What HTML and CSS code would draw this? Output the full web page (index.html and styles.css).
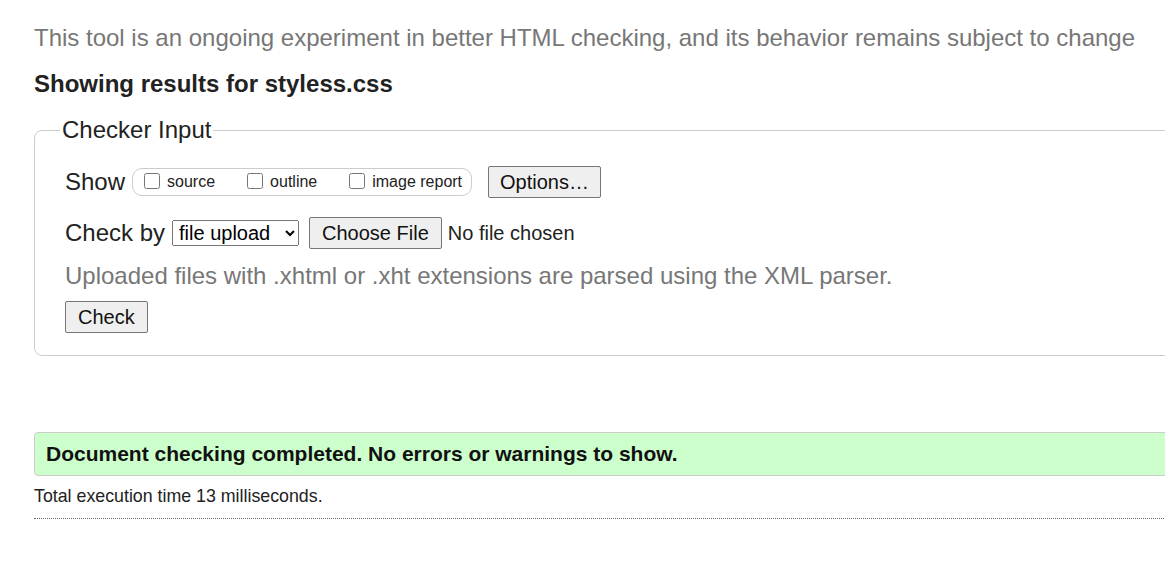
FILE: index.html
```html
<!DOCTYPE html>
<html>
<head>
<meta charset="utf-8">
<link rel="stylesheet" href="styles.css">
</head>
<body>
<div class="page">
  <p class="intro">This tool is an ongoing experiment in better HTML checking, and its behavior remains subject to change</p>
  <h2 class="heading">Showing results for styless.css</h2>
  <fieldset class="input-box">
    <legend class="legend">Checker Input</legend>
    <div class="row">
      <span class="label">Show</span>
      <span class="opts">
        <label class="opt"><input type="checkbox">source</label>
        <label class="opt"><input type="checkbox">outline</label>
        <label class="opt"><input type="checkbox">image report</label>
      </span>
      <button class="btn btn-options">Options…</button>
    </div>
    <div class="row row-check">
      <span class="label">Check by</span>
      <select class="sel"><option>file upload</option></select>
      <span class="file"><button class="btn">Choose File</button><span class="nofile">No file chosen</span></span>
    </div>
    <p class="hint">Uploaded files with .xhtml or .xht extensions are parsed using the XML parser.</p>
    <button class="btn btn-check">Check</button>
  </fieldset>
  <p class="success">Document checking completed. No errors or warnings to show.</p>
  <p class="stats">Total execution time 13 milliseconds.</p>
  <hr class="rule">
</div>
</body>
</html>
```
FILE: styles.css
```css
html, body {
  margin: 0;
  padding: 0;
  overflow: hidden;
  background: #fff;
}
body {
  font-family: "Liberation Sans", Arial, sans-serif;
  color: #111;
}
.page {
  width: 1220px;
  padding: 0 0 0 34px;
}
.intro {
  margin: 24px 0 0;
  font-size: 24px;
  line-height: 28px;
  color: #777;
}
.heading {
  margin: 18px 0 0;
  font-size: 24px;
  line-height: 28px;
  font-weight: bold;
  color: #222;
}
.input-box {
  margin: 18px 0 0;
  border: 1px solid #ccc;
  border-radius: 8px;
  padding: 22px 30px 22px;
}
.legend {
  font-size: 24px;
  padding: 0 2px;
  margin-left: -5px;
  color: #222;
}
.row {
  display: flex;
  align-items: center;
  font-size: 24px;
  color: #222;
}
.row-check {
  margin-top: 19px;
}
.label {
  margin-right: 7px;
}
.opts {
  display: inline-flex;
  align-items: center;
  border: 1px solid #ccc;
  border-radius: 10px;
  padding: 0 9px 0 10px;
  height: 26px;
  font-size: 16px;
  gap: 31px;
}
.opt {
  display: inline-flex;
  align-items: center;
}
.opt input {
  width: 16px;
  height: 16px;
  margin: 0 7px 3px 1px;
}
.btn {
  font-family: "Liberation Sans", Arial, sans-serif;
  font-size: 20px;
  line-height: 24px;
  padding: 3px 12px;
  background: #efefef;
  border: 1px solid #767676;
  border-radius: 2px;
  color: #111;
}
.btn-options {
  margin-left: 16px;
  padding: 3px 11px;
}
.sel {
  font-family: "Liberation Sans", Arial, sans-serif;
  font-size: 20px;
  height: 26px;
  width: 127px;
  padding-left: 2px;
  margin-left: 0;
}
.file {
  margin-left: 10px;
  display: inline-flex;
  align-items: center;
  font-size: 20px;
}
.nofile {
  margin-left: 6px;
}
.hint {
  margin: 13px 0 0;
  font-size: 24px;
  color: #777;
}
.btn-check {
  margin-top: 11px;
}
.success {
  margin: 76px 0 0;
  background: #cfc;
  border: 1px solid #ccc;
  border-radius: 4px;
  padding: 9px 11px;
  font-size: 21px;
  line-height: 24px;
  font-weight: bold;
  color: #111;
}
.stats {
  margin: 10px 0 0;
  font-size: 17.8px;
  color: #222;
}
.rule {
  margin: 11px 0 0;
  border: 0;
  border-top: 1px dotted #666;
  height: 0;
}
```
